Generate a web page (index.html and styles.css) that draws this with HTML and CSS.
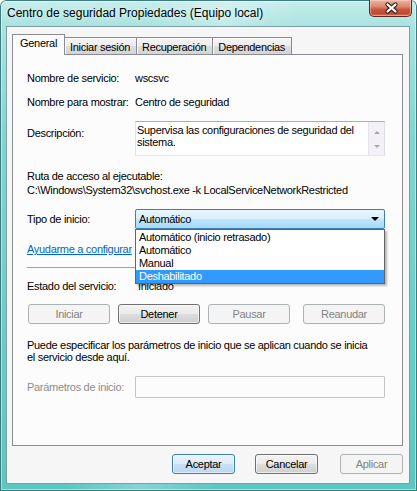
FILE: index.html
```html
<!DOCTYPE html>
<html lang="es">
<head>
<meta charset="utf-8">
<title>Centro de seguridad Propiedades (Equipo local)</title>
<link rel="stylesheet" href="styles.css">
</head>
<body>
<div class="window">
  <div class="titlebar">
    <span class="title">Centro de seguridad Propiedades (Equipo local)</span>
    <div class="close">
      <svg width="43" height="16" viewBox="0 0 43 16">
        <path d="M17.5 4.5 L25.5 11.5 M25.5 4.5 L17.5 11.5" stroke="#3b2420" stroke-width="4.4" stroke-linecap="round" fill="none"/>
        <path d="M17.5 4.5 L25.5 11.5 M25.5 4.5 L17.5 11.5" stroke="#ffffff" stroke-width="2.2" stroke-linecap="round" fill="none"/>
      </svg>
    </div>
  </div>
  <div class="client">
    <div class="tabs">
      <div class="tab active">General</div>
      <div class="tab">Iniciar sesión</div>
      <div class="tab">Recuperación</div>
      <div class="tab">Dependencias</div>
    </div>
    <div class="panel">
      <div class="row">
        <span class="lbl">Nombre de servicio:</span>
        <span class="val">wscsvc</span>
      </div>
      <div class="row r2">
        <span class="lbl">Nombre para mostrar:</span>
        <span class="val">Centro de seguridad</span>
      </div>
      <div class="row desc-row">
        <span class="lbl">Descripción:</span>
        <div class="textbox">
          <div class="tb-text">Supervisa las configuraciones de seguridad del sistema.</div>
          <div class="vscroll">
            <span class="arr up"></span>
            <span class="arr down"></span>
          </div>
        </div>
      </div>
      <div class="path-block">
        <div>Ruta de acceso al ejecutable:</div>
        <div>C:\Windows\System32\svchost.exe -k LocalServiceNetworkRestricted</div>
      </div>
      <div class="row type-row">
        <span class="lbl">Tipo de inicio:</span>
        <div class="combo">
          <span class="combo-text">Automático</span>
          <span class="combo-arrow"></span>
          <div class="dropdown">
            <div class="opt">Automático (inicio retrasado)</div>
            <div class="opt">Automático</div>
            <div class="opt">Manual</div>
            <div class="opt selected">Deshabilitado</div>
          </div>
        </div>
      </div>
      <div class="link-row"><a class="link" href="#">Ayudarme a configurar</a></div>
      <div class="sep"></div>
      <div class="row status-row">
        <span class="lbl">Estado del servicio:</span>
        <span class="val status">Iniciado</span>
      </div>
      <div class="svc-buttons">
        <div class="btn disabled">Iniciar</div>
        <div class="btn pressed">Detener</div>
        <div class="btn disabled">Pausar</div>
        <div class="btn disabled">Reanudar</div>
      </div>
      <p class="note">Puede especificar los parámetros de inicio que se aplican cuando se inicia<br>el servicio desde aquí.</p>
      <div class="row params-row">
        <span class="lbl dim">Parámetros de inicio:</span>
        <div class="params-input"></div>
      </div>
    </div>
    <div class="footer">
      <div class="btn default">Aceptar</div>
      <div class="btn">Cancelar</div>
      <div class="btn disabled apply">Aplicar</div>
    </div>
  </div>
</div>
</body>
</html>
```
FILE: styles.css
```css
html, body {
  margin: 0;
  padding: 0;
  background: #ffffff;
}
body {
  font-family: "Liberation Sans", Arial, sans-serif;
  font-size: 11px;
  letter-spacing: -0.3px;
  color: #000;
}
.window {
  width: 417px;
  height: 491px;
  display: flex;
  flex-direction: column;
  border-radius: 6px 6px 0 0;
  background:
    linear-gradient(100deg, rgba(255,255,255,0) 30%, rgba(255,255,255,0.25) 45%, rgba(255,255,255,0) 60%),
    linear-gradient(180deg, #c6eeec 0px, #a9e3e0 26px, #80d5d0 140px, #66ccc6 360px, #5cc6c0 100%);
  box-shadow: inset 0 0 0 1px #3f7a7e, inset 0 0 0 2px rgba(255,255,255,0.45);
  overflow: hidden;
}
.titlebar {
  height: 26px;
  display: flex;
  align-items: flex-start;
  padding: 0 5px 0 7px;
  flex: none;
}
.title {
  font-size: 12px;
  letter-spacing: 0;
  line-height: 26px;
  color: #000;
  text-shadow: 0 0 6px rgba(255,255,255,0.9);
}
.close {
  margin-left: auto;
  width: 43px;
  height: 17px;
  box-sizing: border-box;
  border: 1px solid #5a2a22;
  border-top: none;
  border-radius: 0 0 5px 5px;
  background: linear-gradient(180deg, #ecb3a1 0%, #dc8a72 40%, #c9553c 60%, #c24a32 85%, #d9755c 100%);
  box-shadow: inset 0 0 0 1px rgba(255,220,210,0.45);
}
.close svg {
  display: block;
}
.client {
  flex: 1;
  margin: 0 7px 7px 6px;
  border: 1px solid #7d9ea2;
  background: #f6f6f6;
  display: flex;
  flex-direction: column;
}
.tabs {
  display: flex;
  align-items: flex-end;
  padding: 7px 0 0 5px;
  height: 20px;
}
.tab {
  height: 17px;
  box-sizing: border-box;
  padding: 2px 6px 0 5px;
  line-height: 14px;
  border: 1px solid #898c95;
  border-bottom: none;
  border-left: none;
  background: linear-gradient(180deg, #f4f4f4 0%, #ececec 50%, #dedede 51%, #d4d4d4 100%);
  box-shadow: inset 1px 1px 0 rgba(255,255,255,0.8);
}
.tab.active {
  height: 21px;
  margin-bottom: -1px;
  padding: 1px 7px 0 7px;
  border-left: 1px solid #898c95;
  background: #fcfcfc;
  box-shadow: none;
  position: relative;
  z-index: 1;
}
.panel {
  margin-left: 5px;
  width: 391px;
  height: 392px;
  box-sizing: border-box;
  border: 1px solid #898c95;
  background: #fcfcfc;
  padding: 16px 17px 0 14px;
}
.row {
  display: flex;
  align-items: flex-start;
  line-height: 14px;
}
.lbl {
  width: 108px;
  flex: none;
}
.dim {
  color: #8d8d8d;
}
.r2 {
  margin-top: 10px;
}
.desc-row {
  margin-top: 12px;
}
.desc-row .lbl {
  padding-top: 5px;
}
.textbox {
  width: 250px;
  height: 35px;
  box-sizing: border-box;
  border: 1px solid;
  border-color: #abadb3 #dbdfe6 #e3e9ef #e2e3ea;
  background: #fff;
  display: flex;
}
.tb-text {
  flex: 1;
  padding: 2px 0 0 1px;
  line-height: 12px;
}
.vscroll {
  width: 16px;
  flex: none;
  background: #f3f1f7;
  border-left: 1px solid #e6e2ee;
  display: flex;
  flex-direction: column;
  align-items: center;
  justify-content: space-between;
  padding: 9px 0 7px;
  box-sizing: border-box;
}
.arr {
  width: 0;
  height: 0;
  border-left: 3px solid transparent;
  border-right: 3px solid transparent;
}
.arr.up {
  border-bottom: 3px solid #a5a3b5;
}
.arr.down {
  border-top: 3px solid #a5a3b5;
}
.path-block {
  margin-top: 13px;
  line-height: 14px;
  white-space: nowrap;
}
.type-row {
  margin-top: 12px;
  align-items: center;
}
.combo {
  position: relative;
  width: 250px;
  height: 20px;
  box-sizing: border-box;
  border: 1px solid #3c7fb1;
  border-radius: 2px;
  background: linear-gradient(180deg, #eaf6fd 0%, #d9f0fc 48%, #bee6fd 52%, #a7d9f5 100%);
  display: flex;
  align-items: center;
  padding-left: 3px;
}
.combo-text {
  line-height: 14px;
}
.combo-arrow {
  margin-left: auto;
  margin-right: 5px;
  width: 0;
  height: 0;
  border-left: 4px solid transparent;
  border-right: 4px solid transparent;
  border-top: 4px solid #000;
}
.dropdown {
  position: absolute;
  top: calc(100% + 1px);
  left: -1px;
  width: 250px;
  box-sizing: border-box;
  border: 1px solid #646464;
  background: #fff;
  padding: 1px 0 0 0;
  z-index: 10;
  box-shadow: 2px 2px 2px rgba(0,0,0,0.28);
}
.opt {
  height: 13px;
  line-height: 13px;
  padding-left: 3px;
  white-space: nowrap;
}
.opt.selected {
  background: #3399ff;
  color: #fff;
}
.link-row {
  margin-top: 13px;
  height: 14px;
  line-height: 14px;
}
.link {
  color: #0066cc;
  white-space: nowrap;
}
.sep {
  margin-top: 11px;
  height: 1px;
  background: #a0a0a0;
}
.status-row {
  margin-top: 11px;
}
.status {
  padding-left: 3px;
}
.btn {
  height: 20px;
  box-sizing: border-box;
  border: 1px solid #707070;
  border-radius: 3px;
  background: linear-gradient(180deg, #f2f2f2 0%, #ebebeb 48%, #dddddd 52%, #cfcfcf 100%);
  box-shadow: inset 0 0 0 1px rgba(255,255,255,0.6);
  display: flex;
  align-items: center;
  justify-content: center;
  line-height: 14px;
}
.btn.disabled {
  border-color: #adb2b5;
  background: #f4f4f4;
  color: #838383;
  box-shadow: none;
}
.btn.default {
  border-color: #3c7fb1;
  background: linear-gradient(180deg, #eaf4fc 0%, #dcebf8 48%, #c8dff4 52%, #bcd8f1 100%);
  box-shadow: inset 0 0 0 1px rgba(255,255,255,0.5);
}
.svc-buttons {
  margin-top: 11px;
  display: flex;
  gap: 8px;
  padding-left: 1px;
}
.svc-buttons .btn {
  width: 82px;
}
.svc-buttons .btn:last-child {
  margin-left: auto;
}
.note {
  margin: 15px 0 0 0;
  line-height: 12px;
  white-space: nowrap;
}
.params-row {
  margin-top: 13px;
  align-items: center;
}
.params-input {
  width: 250px;
  height: 22px;
  box-sizing: border-box;
  border: 1px solid #c4c4c4;
  border-radius: 1px;
  background: #fcfcfc;
}
.footer {
  margin-top: 8px;
  display: flex;
  justify-content: flex-end;
  gap: 20px;
  padding-right: 6px;
}
.footer .btn {
  width: 63px;
}
.footer .apply {
  margin-left: 2px;
}
```
